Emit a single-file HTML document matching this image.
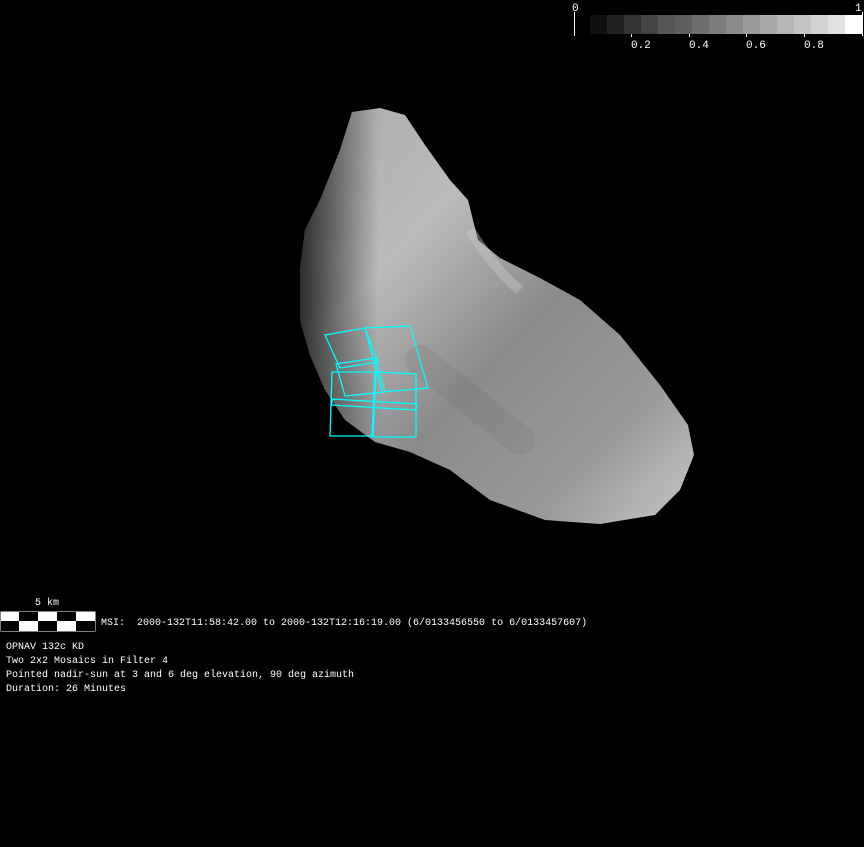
<!DOCTYPE html>
<html><head><style>
body{margin:0;width:864px;height:847px;background:#000;overflow:hidden;position:relative;font-family:"Liberation Mono",monospace;color:#fff}
.t{position:absolute;font-size:10px;white-space:pre;line-height:14px}
</style></head><body>
<svg width="864" height="847" style="position:absolute;left:0;top:0">
<defs>
<linearGradient id="g" x1="0" y1="0" x2="1" y2="1">
<stop offset="0" stop-color="#aaa"/><stop offset="0.3" stop-color="#bbb"/><stop offset="0.55" stop-color="#8a8a8a"/><stop offset="0.8" stop-color="#9a9a9a"/><stop offset="1" stop-color="#c8c8c8"/>
</linearGradient>
<linearGradient id="s" x1="0" y1="0" x2="1" y2="0">
<stop offset="0" stop-color="#000" stop-opacity=".75"/><stop offset=".2" stop-color="#000" stop-opacity="0"/>
</linearGradient>
</defs>
<polygon fill="url(#g)" points="352,112 380,108 405,115 425,145 450,180 468,200 478,240 500,258 540,278 580,300 620,335 660,385 688,425 694,455 680,490 655,515 600,524 545,520 490,500 450,470 410,452 375,442 345,420 325,390 310,355 300,320 300,270 305,230 320,200 340,150"/>
<polygon fill="url(#s)" points="352,112 380,108 405,115 425,145 450,180 468,200 478,240 500,258 540,278 580,300 620,335 660,385 688,425 694,455 680,490 655,515 600,524 545,520 490,500 450,470 410,452 375,442 345,420 325,390 310,355 300,320 300,270 305,230 320,200 340,150"/>
<path d="M470 230 Q495 270 520 290" stroke="#ccc" stroke-width="10" fill="none" opacity=".4"/>
<path d="M420 360 Q470 400 520 440" stroke="#666" stroke-width="30" fill="none" opacity=".15" stroke-linecap="round"/>
<g fill="none" stroke="#0ff" stroke-width="1.3">
<polygon points="325,335 365,328 378,362 340,368"/>
<polygon points="365,328 410,326 428,388 382,392"/>
<polygon points="336,364 375,358 385,392 345,396"/>
<polygon points="332,372 375,372 372,436 330,436"/>
<polygon points="376,372 416,374 416,437 373,437"/>
<polygon points="332,399 417,404 416,410 332,405"/>
</g>
<g>
<rect x="590" y="15" width="17" height="19" fill="#111"/><rect x="607" y="15" width="17" height="19" fill="#222"/><rect x="624" y="15" width="17" height="19" fill="#333"/><rect x="641" y="15" width="17" height="19" fill="#444"/><rect x="658" y="15" width="17" height="19" fill="#555"/><rect x="675" y="15" width="17" height="19" fill="#5e5e5e"/><rect x="692" y="15" width="17" height="19" fill="#6e6e6e"/><rect x="709" y="15" width="17" height="19" fill="#7c7c7c"/><rect x="726" y="15" width="17" height="19" fill="#8a8a8a"/><rect x="743" y="15" width="17" height="19" fill="#999"/><rect x="760" y="15" width="17" height="19" fill="#a8a8a8"/><rect x="777" y="15" width="17" height="19" fill="#b6b6b6"/><rect x="794" y="15" width="17" height="19" fill="#c4c4c4"/><rect x="811" y="15" width="17" height="19" fill="#d2d2d2"/><rect x="828" y="15" width="17" height="19" fill="#e2e2e2"/><rect x="845" y="15" width="17" height="19" fill="#fff"/>
</g>
<g stroke="#fff"><line x1="574.5" y1="12" x2="574.5" y2="36"/><line x1="862.5" y1="12" x2="862.5" y2="36"/>
<line x1="631.5" y1="34" x2="631.5" y2="37"/><line x1="689.5" y1="34" x2="689.5" y2="37"/><line x1="746.5" y1="34" x2="746.5" y2="37"/><line x1="804.5" y1="34" x2="804.5" y2="37"/></g>
<g font-family="Liberation Mono,monospace" font-size="11" fill="#fff">
<text x="572" y="11">0</text><text x="855" y="11">1</text>
<text x="631" y="48">0.2</text><text x="689" y="48">0.4</text><text x="746" y="48">0.6</text><text x="804" y="48">0.8</text>
</g>
<rect x="0.5" y="611.5" width="95" height="20" fill="#fff"/>
<g fill="#000"><rect x="19" y="612" width="19" height="9"/><rect x="57" y="612" width="19" height="9"/><rect x="1" y="621" width="18" height="10"/><rect x="38" y="621" width="19" height="10"/><rect x="76" y="621" width="19" height="10"/></g>
</svg>
<div class="t" style="left:35px;top:597px">5 km</div>
<div class="t" style="left:101px;top:617px">MSI:  2000-132T11:58:42.00 to 2000-132T12:16:19.00 (6/0133456550 to 6/0133457607)</div>
<div class="t" style="left:6px;top:641px">OPNAV 132c KD
Two 2x2 Mosaics in Filter 4
Pointed nadir-sun at 3 and 6 deg elevation, 90 deg azimuth
Duration: 26 Minutes</div>
</body></html>
